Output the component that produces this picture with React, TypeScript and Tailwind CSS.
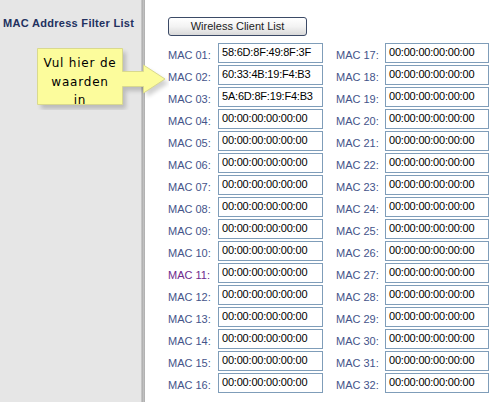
import React from "react";

const FONT = "font-['Liberation_Sans',Arial,sans-serif]";

const left = Array.from({ length: 16 }, (_, i) => i + 1);
const values: Record<number, string> = {
  1: "58:6D:8F:49:8F:3F",
  2: "60:33:4B:19:F4:B3",
  3: "5A:6D:8F:19:F4:B3",
};

function pad(n: number) {
  return n < 10 ? `0${n}` : `${n}`;
}

function MacField({ n }: { n: number }) {
  // Label 11 was a visited link in the original page.
  const labelColor = n === 11 ? "text-[#6e2a8c]" : "text-[#44548a]";
  return (
    <>
      <span className={`self-end pb-[1px] text-[11px] leading-[13px] ${labelColor}`}>MAC {pad(n)}:</span>
      <div className="h-[20px] border border-[#7f9db9] bg-white pl-[3px] pt-[2px] text-[11px] leading-[13px] tracking-[-0.2px] text-black">
        {values[n] ?? "00:00:00:00:00:00"}
      </div>
    </>
  );
}

function Callout() {
  return (
    <div className="absolute left-[35px] top-[46px] h-[64px] w-[134px]">
      <svg width="134" height="64" className="absolute left-0 top-0">
        <defs>
          <filter id="sh" x="-10%" y="-10%" width="130%" height="130%">
            <feGaussianBlur stdDeviation="2" />
          </filter>
        </defs>
        <path
          d="M6 6 H91 V29 H112 V23 L134 37 L112 51 V45 H91 V63 H6 Z"
          fill="#000"
          opacity="0.18"
          filter="url(#sh)"
        />
        <path
          d="M2.5 2.5 H87.5 V25.5 H108.5 V19 L130 33 L108.5 47 V40.5 H87.5 V58.5 H2.5 Z"
          fill="#fcfc9c"
          stroke="#d9d98e"
        />
      </svg>
      <div className="absolute left-[2px] top-[8px] w-[86px] text-center font-['DejaVu_Sans',Verdana,sans-serif] text-[12px] leading-[18.5px] tracking-[0.8px] text-black">
        Vul hier de
        <br />
        waarden
        <br />
        in
      </div>
    </div>
  );
}

export default function App() {
  return (
    <div className={`relative flex h-[402px] w-[499px] overflow-hidden bg-white ${FONT}`}>
      {/* Sidebar */}
      <div className="w-[141px] shrink-0 bg-[#e6e6e6] pt-[17px] pl-[3px]">
        <p className="text-[11px] font-bold leading-[13px] tracking-[0.3px] text-[#22315f]">MAC Address Filter List</p>
      </div>
      <div className="w-[4px] shrink-0 bg-[linear-gradient(to_right,#d2d2d2,#b0b0b0,#c2c2c2,#a9a9a9)]" />

      {/* Content */}
      <div className="flex-1 pl-[23px] pt-[13px]">
        <button className="h-[19px] w-[139px] rounded-[3px] border border-[#3b4a66] bg-[linear-gradient(to_bottom,#ffffff,#f3f3f3_50%,#d9d9d9)] text-[11px] leading-[13px] text-[#1c1c1c]">
          Wireless Client List
        </button>

        <div className="mt-[6px] grid grid-cols-[50px_105px_13px_49px_104px] gap-y-[2px]">
          {left.map((n) => (
            <React.Fragment key={n}>
              <MacField n={n} />
              <span />
              <MacField n={n + 16} />
            </React.Fragment>
          ))}
        </div>
      </div>

      <Callout />
    </div>
  );
}
